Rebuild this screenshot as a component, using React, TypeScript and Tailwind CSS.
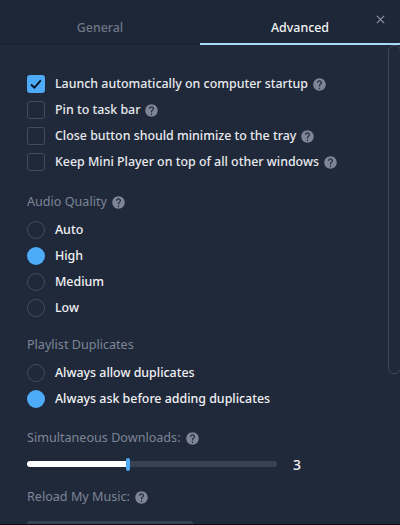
import React from 'react';
import { MdHelp } from 'react-icons/md';

const Help = () => <MdHelp className="ml-[4px] h-[15px] w-[15px] shrink-0 text-[#7d8596]" />;

const Check = ({ label, checked }: { label: string; checked?: boolean }) => (
  <div className="flex h-[26px] items-center">
    {checked ? (
      <div className="flex h-[18px] w-[18px] items-center justify-center rounded-[3px] bg-[#4dabf7]">
        <svg viewBox="0 0 18 18" className="h-[18px] w-[18px]" fill="none" stroke="#0b1020" strokeWidth="1.8">
          <path d="M4 9.5l3.4 3.2L13.8 5.4" />
        </svg>
      </div>
    ) : (
      <div className="h-[18px] w-[18px] rounded-[3px] border border-[#434b5c]" />
    )}
    <span className="ml-[10px] text-[12.4px] font-medium text-[#e8eaee]">{label}</span>
    <Help />
  </div>
);

const Radio = ({ label, checked }: { label: string; checked?: boolean }) => (
  <div className="flex h-[26px] items-center">
    <div className={checked ? 'h-[18px] w-[18px] rounded-full bg-[#4dabf7]' : 'h-[18px] w-[18px] rounded-full border border-[#434b5c]'} />
    <span className="ml-[10px] text-[12.4px] font-medium text-[#f0f1f4]">{label}</span>
  </div>
);

const Heading = ({ label, help }: { label: string; help?: boolean }) => (
  <div className="flex h-[20px] items-center text-[12.6px] text-[#7d8596]">
    <span>{label}</span>
    {help && <Help />}
  </div>
);

export default function App() {
  return (
    <div className="relative h-[525px] w-[400px] overflow-hidden bg-[#20293a] font-['Noto_Sans',sans-serif]">
      {/* Tabs */}
      <div className="flex h-[45px] bg-[#1e2738]">
        <div className="flex w-[200px] items-center justify-center border-b-2 border-[#1a2232] pt-[13px] text-[12.4px] font-medium text-[#6f7787]">
          General
        </div>
        <div className="flex w-[200px] items-center justify-center border-b-2 border-[#a6dcf5] pt-[13px] text-[12.4px] font-medium text-[#f2f3f5]">
          Advanced
        </div>
      </div>
      <svg viewBox="0 0 10 10" className="absolute top-[15px] right-[15px] h-[9px] w-[9px]" stroke="#8f96a3" strokeWidth="1.3">
        <path d="M1 1l8 8M9 1L1 9" />
      </svg>

      {/* Scrollbar */}
      <div className="absolute top-[45px] right-[-1px] h-[329px] w-[13px] rounded-[6px] border border-[#3f4858]" />

      <div className="pt-[26px] pl-[27px]">
        <Check label="Launch automatically on computer startup" checked />
        <Check label="Pin to task bar" />
        <Check label="Close button should minimize to the tray" />
        <Check label="Keep Mini Player on top of all other windows" />

        <div className="mt-[17px]">
          <Heading label="Audio Quality" help />
        </div>
        <div className="mt-[5px]">
          <Radio label="Auto" />
          <Radio label="High" checked />
          <Radio label="Medium" />
          <Radio label="Low" />
        </div>

        <div className="mt-[14px]">
          <Heading label="Playlist Duplicates" />
        </div>
        <div className="mt-[5px]">
          <Radio label="Always allow duplicates" />
          <Radio label="Always ask before adding duplicates" checked />
        </div>

        <div className="mt-[16px]">
          <Heading label="Simultaneous Downloads:" help />
        </div>

        {/* Slider */}
        <div className="mt-[9px] flex h-[14px] items-center">
          <div className="flex h-[6px] w-[250px] items-center rounded-full bg-[#394252]">
            <div className="h-[6px] w-[99px] rounded-l-full bg-white" />
            <div className="h-[13px] w-[4px] rounded-full bg-[#4dabf7]" />
          </div>
          <span className="ml-[16px] text-[14px] font-medium text-[#f0f1f4]">3</span>
        </div>

        <div className="mt-[16px]">
          <Heading label="Reload My Music:" help />
        </div>
        <div className="mt-[14px] h-[30px] w-[166px] rounded-[3px] bg-[#394252]" />
      </div>

      <div className="absolute right-0 bottom-0 left-0 h-px bg-[#0a0d14]" />
    </div>
  );
}
